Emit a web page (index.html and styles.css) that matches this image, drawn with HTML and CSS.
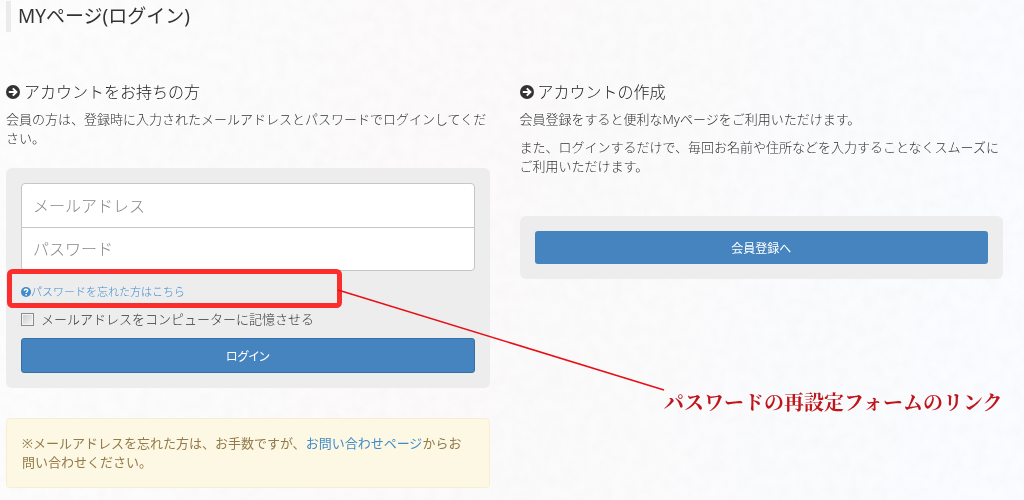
FILE: index.html
```html
<!DOCTYPE html>
<html lang="ja">
<head>
<meta charset="utf-8">
<meta name="viewport" content="width=device-width, initial-scale=1">
<title>MYページ(ログイン)</title>
<link rel="stylesheet" href="styles.css">
</head>
<body>
<svg class="paper" aria-hidden="true">
  <filter id="grain" x="0" y="0" width="100%" height="100%">
    <feTurbulence type="fractalNoise" baseFrequency="0.08" numOctaves="3" seed="4"/>
    <feColorMatrix values="0 0 0 0 0.5  0 0 0 0 0.45  0 0 0 0 0.5  0.08 0 0 0 -0.025"/>
  </filter>
  <rect width="100%" height="100%" filter="url(#grain)"/>
</svg>
<div class="page">
  <h1 class="page-title">MYページ(ログイン)</h1>
  <main class="columns">
    <section>
      <h2 class="section-title">
        <svg class="arrow-icon" viewBox="0 0 14 14" aria-hidden="true"><circle cx="7" cy="7" r="7" fill="#333"/><path d="M2.8 7H10M6.8 3.4L10.4 7l-3.6 3.6" fill="none" stroke="#fff" stroke-width="2"/></svg>
        アカウントをお持ちの方
      </h2>
      <p class="text">会員の方は、登録時に入力されたメールアドレスとパスワードでログインしてください。</p>
      <form class="panel login-panel">
        <input class="field field-top" type="email" placeholder="メールアドレス" aria-label="メールアドレス">
        <input class="field field-bottom" type="password" placeholder="パスワード" aria-label="パスワード">
        <a class="forgot" href="#reset"><svg class="help-icon" viewBox="0 0 10 10" aria-hidden="true"><circle cx="5" cy="5" r="5" fill="#428bca"/><path d="M3.2 3.8C3.3 1.7 6.8 1.8 6.7 3.8C6.6 4.8 5.1 4.8 5.1 6.1M5.1 7v1.4" fill="none" stroke="#fff" stroke-width="1.4"/></svg>パスワードを忘れた方はこちら</a>
        <label class="remember" for="remember"><input class="check" type="checkbox" id="remember">メールアドレスをコンピューターに記憶させる</label>
        <button class="button button-outlined" type="submit">ログイン</button>
      </form>
      <p class="notice">※メールアドレスを忘れた方は、お手数ですが、<a href="#contact">お問い合わせページ</a>からお問い合わせください。</p>
    </section>
    <section>
      <h2 class="section-title">
        <svg class="arrow-icon" viewBox="0 0 14 14" aria-hidden="true"><circle cx="7" cy="7" r="7" fill="#333"/><path d="M2.8 7H10M6.8 3.4L10.4 7l-3.6 3.6" fill="none" stroke="#fff" stroke-width="2"/></svg>
        アカウントの作成
      </h2>
      <p class="text">会員登録をすると便利なMyページをご利用いただけます。</p>
      <p class="text">また、ログインするだけで、毎回お名前や住所などを入力することなくスムーズにご利用いただけます。</p>
      <div class="panel signup-panel">
        <button class="button" type="button">会員登録へ</button>
      </div>
    </section>
  </main>
  <svg class="callout" width="680" height="400" viewBox="0 0 680 400" aria-hidden="true">
    <rect x="9.5" y="271.5" width="330" height="34" rx="3" fill="none" stroke="#fc2d2d" stroke-width="5"/>
    <path d="M338 290L664 390" fill="none" stroke="#e80f14" stroke-width="1.5"/>
  </svg>
  <p class="callout-text">パスワードの再設定フォームのリンク</p>
</div>
</body>
</html>
```
FILE: styles.css
```css
* {
  box-sizing: border-box;
}

body {
  margin: 0;
  color: #333;
  background: linear-gradient(100deg, #fdfdfe 0%, #fcfafb 45%, #fbfbfc 65%, #fafcff 100%);
  font: 300 13px/19px "Noto Sans", "Noto Sans CJK JP", sans-serif;
}

h1,
h2,
p {
  margin: 0;
  font-weight: 300;
}

a {
  color: #428bca;
  text-decoration: none;
}

.paper {
  position: fixed;
  inset: 0;
  width: 100%;
  height: 100%;
}

.page {
  position: relative;
  padding: 1px 21px 12px 6px;
}

.page-title {
  padding-left: 7px;
  border-left: 5px solid #ebebec;
  font-size: 19px;
  font-weight: 400;
  line-height: 31px;
}

.columns {
  display: grid;
  grid-template-columns: 1fr 1fr;
  gap: 30px;
  margin-top: 48px;
}

.section-title {
  display: flex;
  align-items: center;
  gap: 4px;
  margin-bottom: 6px;
  color: #222;
  font-size: 16px;
  line-height: 24px;
}

.arrow-icon {
  width: 14px;
  height: 14px;
}

.text {
  margin-bottom: 9px;
}

.panel {
  display: flex;
  flex-direction: column;
  padding: 15px;
  border-radius: 6px;
  background: #ededed;
}

.login-panel {
  margin-top: 20px;
}

.signup-panel {
  margin-top: 40px;
}

.field {
  width: 100%;
  height: 45px;
  padding: 0 11px;
  border: 1px solid #c6c6c6;
  background: #fff;
  color: #555;
  font: 300 16px "Noto Sans", "Noto Sans CJK JP", sans-serif;
}

.field::placeholder {
  color: #888;
  opacity: 1;
}

.field-top {
  border-radius: 4px 4px 0 0;
}

.field-bottom {
  height: 44px;
  margin: -1px 0 11px;
  border-radius: 0 0 4px 4px;
}

.forgot {
  display: flex;
  align-items: center;
  align-self: flex-start;
  font-size: 11px;
}

.help-icon {
  width: 10px;
  height: 10px;
}

.remember {
  display: flex;
  align-items: center;
  gap: 7px;
  margin: 9px 0;
}

.check {
  appearance: none;
  width: 13px;
  height: 13px;
  margin: 0;
  border: 1px solid #8b8b8b;
  background: linear-gradient(135deg, #c9ccd1, #f6f6f6);
  box-shadow: inset 0 0 0 1px #f4f4f4;
}

.button {
  padding: 7px 12px;
  border: 0;
  border-radius: 3px;
  background: #4584bf;
  color: #fff;
  font: 400 12px/19px "Noto Sans CJK JP", sans-serif;
  font-feature-settings: "palt";
}

.button-outlined {
  border: 1px solid #3570a8;
}

.notice {
  margin-top: 30px;
  padding: 15px;
  border: 1px solid #f8edcf;
  border-radius: 4px;
  background: #fcf8e3;
  color: #94794a;
  font-weight: 400;
}

.callout {
  position: absolute;
  top: 0;
  left: 0;
  pointer-events: none;
}

.callout-text {
  position: absolute;
  top: 387px;
  left: 664px;
  color: #bf151b;
  font: 700 20px/30px "Noto Serif CJK JP", "Noto Sans CJK JP", serif;
  white-space: nowrap;
}
```
